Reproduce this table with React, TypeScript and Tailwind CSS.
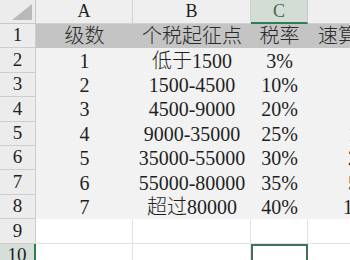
import React from "react";

const rows: [string, string, string, string][] = [
  ["级数", "个税起征点", "税率", "速算扣除数"],
  ["1", "低于1500", "3%", "0"],
  ["2", "1500-4500", "10%", "105"],
  ["3", "4500-9000", "20%", "555"],
  ["4", "9000-35000", "25%", "1005"],
  ["5", "35000-55000", "30%", "2755"],
  ["6", "55000-80000", "35%", "5505"],
  ["7", "超过80000", "40%", "13505"],
];

const font = { fontFamily: '"Liberation Serif", "Noto Sans CJK SC", serif' };

export default function App() {
  const cols = ["A", "B", "C", "D"];
  return (
    <div className="w-[350px] h-[260px] overflow-hidden bg-white text-[#1f1f1f] font-light" style={font}>
      <div className="grid grid-cols-[36px_97px_118px_57px_120px] grid-rows-[24px_repeat(10,24.4px)] w-[428px]">
        {/* header row */}
        <div className="relative bg-[#ececec] border-r border-b border-[#c9c9c9]">
          <div className="absolute right-[3px] bottom-[3px] w-0 h-0 border-l-[20px] border-l-transparent border-b-[16px] border-b-[#b9b9b9]" />
        </div>
        {cols.map((c) =>
          c === "C" ? (
            <div key={c} className="flex items-center justify-center bg-[#d3ddd6] text-[#3d6b52] text-[18px] border-r border-[#c9c9c9] border-b-2 border-b-[#2f7d52]">
              {c}
            </div>
          ) : (
            <div key={c} className="flex items-center justify-center bg-[#efefef] text-[18px] border-r border-b border-[#d2d2d2]">
              {c}
            </div>
          )
        )}
        {/* data rows */}
        {rows.map((r, i) => (
          <React.Fragment key={i}>
            <div className="flex items-center justify-center bg-[#ececec] text-[19px] border-r border-b border-[#cdcdcd]">
              {i + 1}
            </div>
            {r.map((v, j) => (
              <div
                key={j}
                className={
                  "flex items-center justify-center text-[20px] whitespace-nowrap " +
                  (i === 0 ? "bg-[#c4c4c4] text-[#2a2a2a]" : "bg-[#f2f2f2]")
                }
              >
                {v}
              </div>
            ))}
          </React.Fragment>
        ))}
        {/* empty rows */}
        {[9, 10].map((n) => (
          <React.Fragment key={n}>
            {n === 10 ? (
              <div className="flex items-center justify-center bg-[#d6ded8] text-[19px] border-r-2 border-r-[#2f7d52] border-b border-b-[#cdcdcd]">
                {n}
              </div>
            ) : (
              <div className="flex items-center justify-center bg-[#ececec] text-[19px] border-r border-b border-[#cdcdcd]">
                {n}
              </div>
            )}
            {cols.map((c) =>
              n === 10 && c === "C" ? (
                <div key={c} className="border-2 border-[#3e7358] bg-white" />
              ) : (
                <div key={c} className="border-r border-b border-[#e1e1e1] bg-white" />
              )
            )}
          </React.Fragment>
        ))}
      </div>
    </div>
  );
}
